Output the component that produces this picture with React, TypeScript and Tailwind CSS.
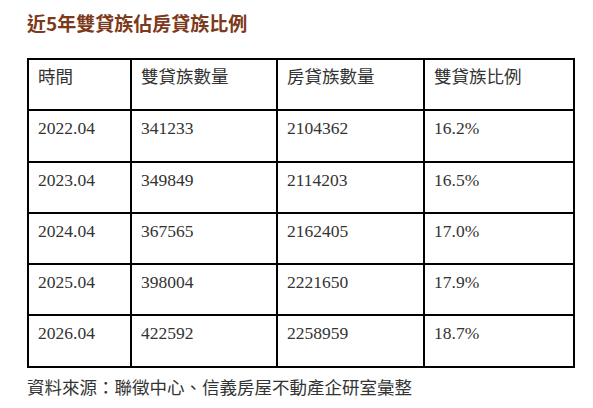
import React from 'react';

const rows = [
  ['2022.04', '341233', '2104362', '16.2%'],
  ['2023.04', '349849', '2114203', '16.5%'],
  ['2024.04', '367565', '2162405', '17.0%'],
  ['2025.04', '398004', '2221650', '17.9%'],
  ['2026.04', '422592', '2258959', '18.7%'],
];

const headers = ['時間', '雙貸族數量', '房貸族數量', '雙貸族比例'];

const cell = 'border-2 border-black align-top px-[9px] pt-[5px] h-[51.3px] leading-6';

const App: React.FC = () => {
  return (
    <div
      className="w-[593px] h-[408px] bg-white px-[27px] pt-[10px] text-[#333] text-[17.5px]"
      style={{ fontFamily: '"Liberation Serif", "Noto Sans CJK TC", serif' }}
    >
      <h2
        className="text-[19px] font-bold leading-[26px] text-[#7d3a1a]"
        style={{ fontFamily: '"Noto Sans CJK TC", sans-serif' }}
      >
        近5年雙貸族佔房貸族比例
      </h2>
      <table className="mt-[22px] w-[546px] border-collapse table-fixed">
        <colgroup>
          <col className="w-[103px]" />
          <col className="w-[146px]" />
          <col className="w-[147px]" />
          <col className="w-[150px]" />
        </colgroup>
        <thead>
          <tr>
            {headers.map((h) => (
              <th key={h} className={`${cell} text-left font-normal`}>
                {h}
              </th>
            ))}
          </tr>
        </thead>
        <tbody>
          {rows.map((r) => (
            <tr key={r[0]}>
              {r.map((v, i) => (
                <td key={i} className={cell}>
                  {v}
                </td>
              ))}
            </tr>
          ))}
        </tbody>
      </table>
      <p className="mt-[8px] leading-6">資料來源：聯徵中心、信義房屋不動產企研室彙整</p>
    </div>
  );
};

export default App;
